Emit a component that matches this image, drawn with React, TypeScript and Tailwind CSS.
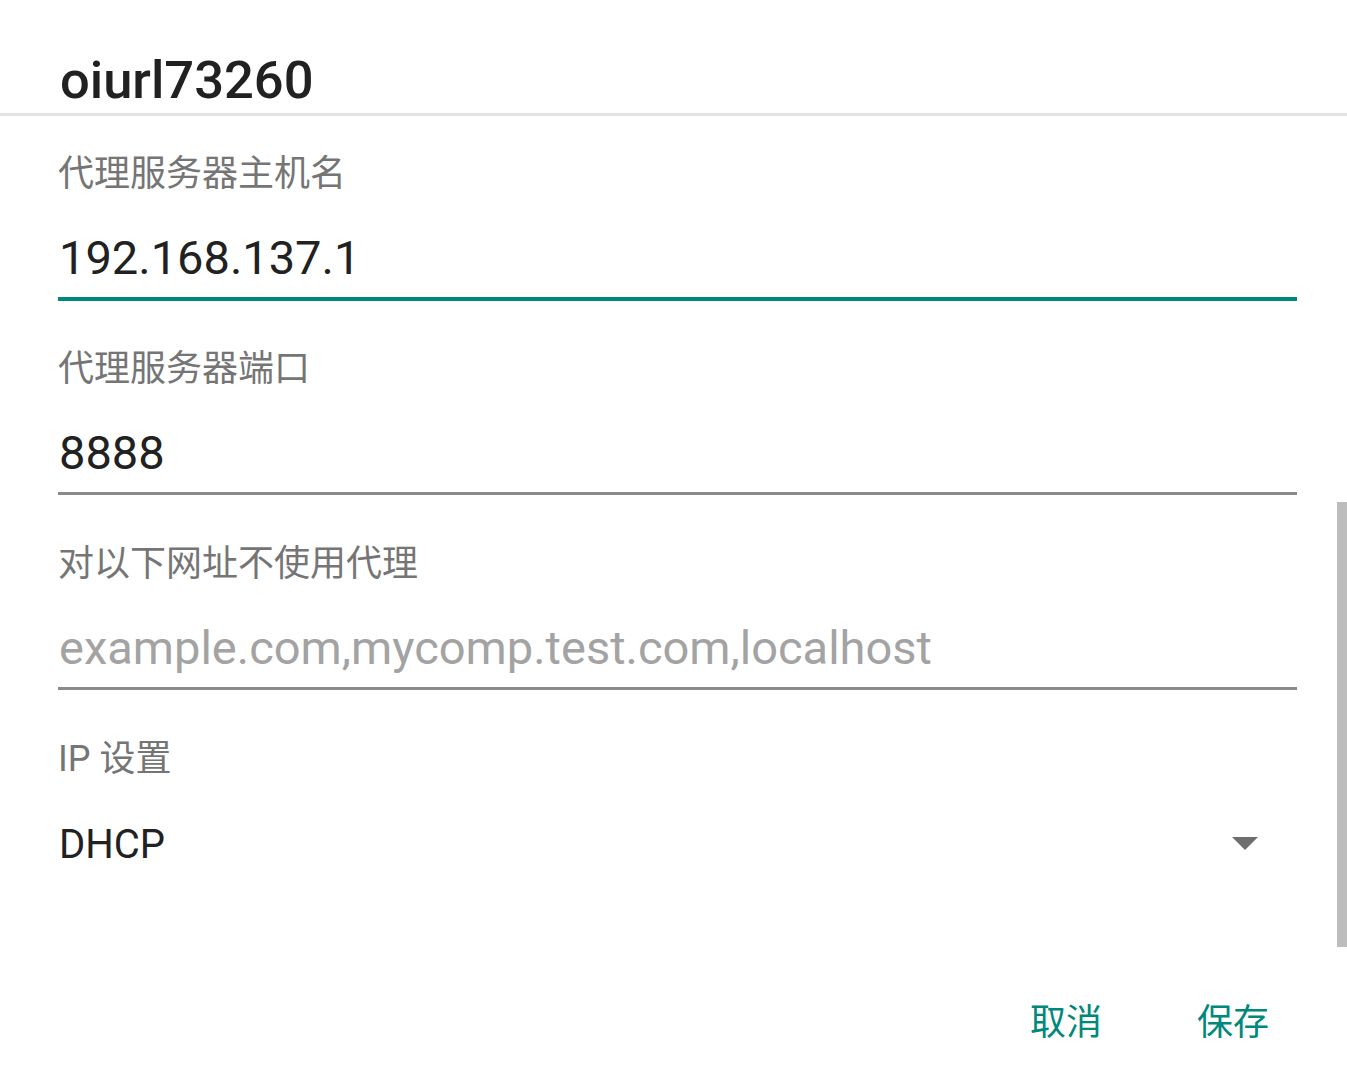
const font = "font-['Roboto','Noto_Sans_CJK_SC',sans-serif]";

function Field({
  label,
  value,
  placeholder,
  focused,
}: {
  label: string;
  value?: string;
  placeholder?: string;
  focused?: boolean;
}) {
  return (
    <div className={focused ? "mb-[50px]" : "mb-[51px]"}>
      <div className="h-[36px] text-[36px] leading-none text-[#757575]">{label}</div>
      <div
        className={
          "mt-[42px] pb-[16px] " +
          (focused ? "border-b-4 border-[#00897b]" : "border-b-[3px] border-[#8a8a8a]")
        }
      >
        <div
          className={
            "h-[47px] text-[47px] leading-none pl-[1px] " +
            (value ? "text-[#212121]" : "text-[#a3a3a3]")
          }
        >
          {value ?? placeholder}
        </div>
      </div>
    </div>
  );
}

export default function App() {
  return (
    <div className={`${font} relative h-[1087px] w-full overflow-hidden bg-white`}>
      {/* header */}
      <div className="h-[116px] border-b-[3px] border-[#e3e3e3] pl-[60px] pt-[54px]">
        <h1 className="text-[52.5px] leading-none font-medium text-[#212121]">oiurl73260</h1>
      </div>

      <div className="pl-[58px] pr-[50px] pt-[40px]">
        <Field label="代理服务器主机名" value="192.168.137.1" focused />
        <Field label="代理服务器端口" value="8888" />
        <Field label="对以下网址不使用代理" placeholder="example.com,mycomp.test.com,localhost" />

        <div>
          <div className="h-[36px] text-[36px] leading-none text-[#757575]">IP 设置</div>
          <div className="mt-[48px] flex items-center justify-between pr-[39px]">
            <div className="h-[40px] text-[40px] leading-none text-[#212121] pl-[1px]">DHCP</div>
            <svg width="26" height="13" viewBox="0 0 26 13" className="mt-[-3px]">
              <path d="M0 0 L26 0 L13 13 Z" fill="#6e6e6e" />
            </svg>
          </div>
        </div>
      </div>

      {/* buttons */}
      <div className="mt-[140px] flex justify-end gap-[95px] pr-[78px]">
        <button className="text-[36px] leading-none text-[#00897b]">取消</button>
        <button className="text-[36px] leading-none text-[#00897b]">保存</button>
      </div>

      {/* scrollbar overlay */}
      <div className="absolute right-0 top-[502px] h-[445px] w-[10px] bg-[#bdbdbd]" />
    </div>
  );
}
